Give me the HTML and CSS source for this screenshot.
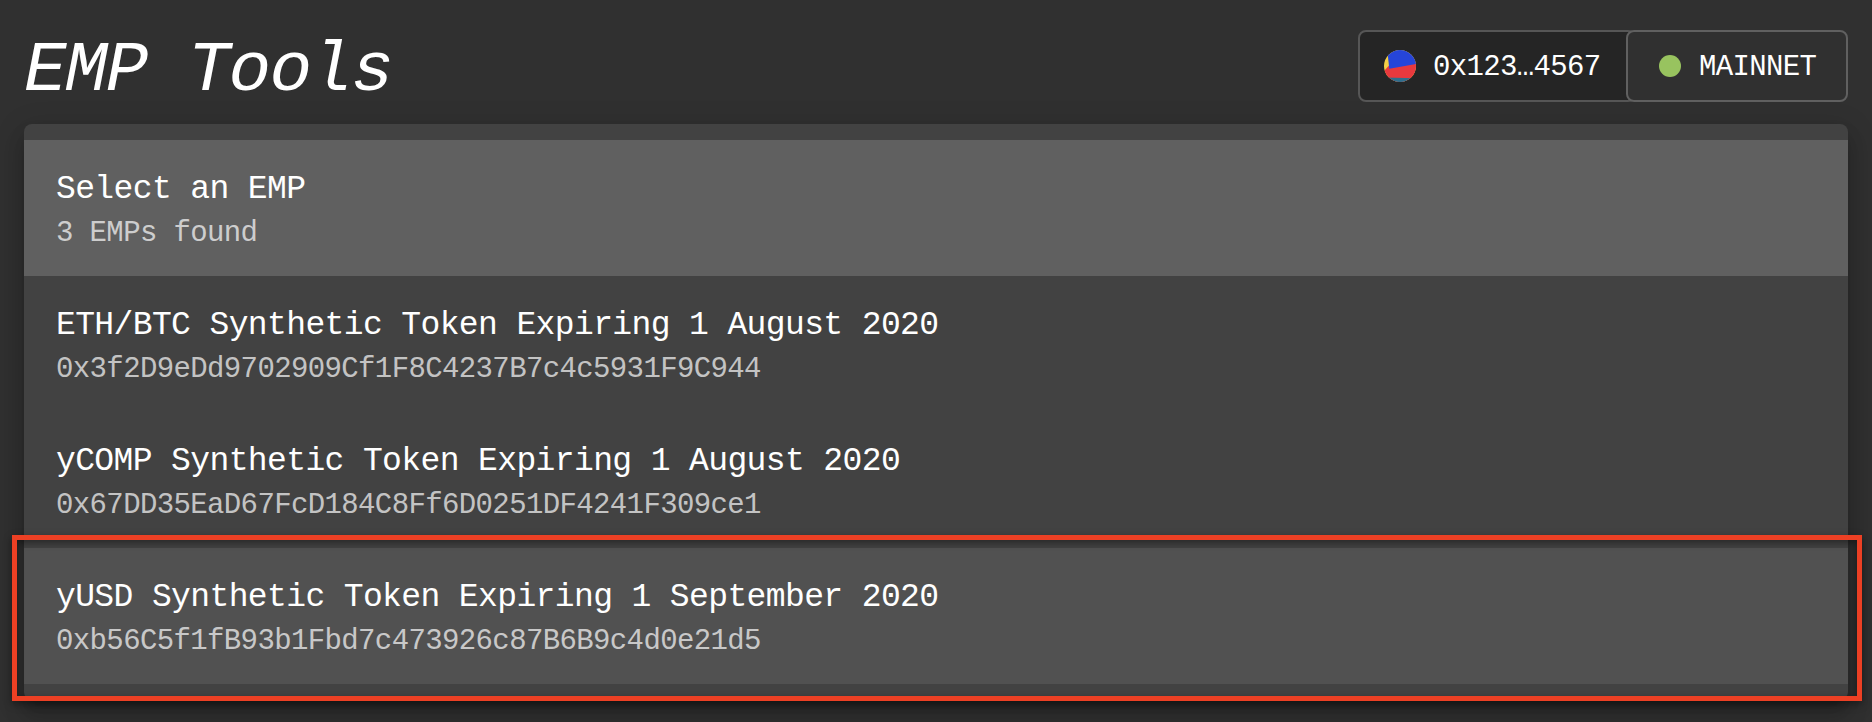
FILE: index.html
```html
<!DOCTYPE html>
<html lang="en">
<head>
<meta charset="utf-8">
<title>EMP Tools</title>
<link rel="stylesheet" href="styles.css">
</head>
<body>
<div class="page">
  <header class="header">
    <h1 class="title">EMP Tools</h1>
    <div class="wallet">
      <button class="chip account">
        <svg class="avatar" viewBox="0 0 32 32">
          <defs><clipPath id="disc"><circle cx="16" cy="16" r="16"/></clipPath></defs>
          <g clip-path="url(#disc)">
            <rect width="32" height="32" fill="#f3cf47"/>
            <path d="M-2 23.300L5 15.500L34 12V34H-2Z" fill="#e8393e"/>
            <path d="M3 -2H34V13.700L5.300 18.700Z" fill="#2645d9"/>
            <path d="M0 27.400L32 28.300V34H0Z" fill="#2e6e8c"/>
          </g>
        </svg>
        <span class="label">0x123…4567</span>
      </button>
      <button class="chip network">
        <span class="dot"></span>
        <span class="label">MAINNET</span>
      </button>
    </div>
  </header>
  <main class="card">
    <ul class="list">
      <li class="row heading"><span class="primary">Select an EMP</span><span class="secondary">3 EMPs found</span></li>
      <li class="row"><span class="primary">ETH/BTC Synthetic Token Expiring 1 August 2020</span><span class="secondary">0x3f2D9eDd9702909Cf1F8C4237B7c4c5931F9C944</span></li>
      <li class="row"><span class="primary">yCOMP Synthetic Token Expiring 1 August 2020</span><span class="secondary">0x67DD35EaD67FcD184C8Ff6D0251DF4241F309ce1</span></li>
      <li class="row hovered"><span class="primary">yUSD Synthetic Token Expiring 1 September 2020</span><span class="secondary">0xb56C5f1fB93b1Fbd7c473926c87B6B9c4d0e21d5</span></li>
    </ul>
    <div class="highlight"></div>
  </main>
</div>
</body>
</html>
```
FILE: styles.css
```css
* { box-sizing: border-box; }
body {
  margin: 0;
  height: 722px;
  overflow: hidden;
  background: #303030;
  color: #fff;
  font-family: "Liberation Mono", monospace;
}
.page { padding: 0 24px; }
.header {
  height: 124px;
  display: flex;
  justify-content: space-between;
  align-items: flex-start;
  padding-top: 30px;
}
.title {
  margin: 0;
  padding-top: 5px;
  font-size: 71px;
  line-height: 72px;
  font-weight: 400;
  font-style: italic;
  letter-spacing: -1.7px;
}
.wallet { display: flex; }
.chip {
  height: 72px;
  display: flex;
  align-items: center;
  border: 2px solid #606060;
  border-radius: 8px;
  background: #303030;
  color: #fff;
  font-family: inherit;
  font-size: 29px;
  letter-spacing: -0.65px;
  padding: 0;
  white-space: nowrap;
}
.account {
  width: 278px;
  margin-right: -10px;
  padding-left: 24px;
  gap: 17px;
  background: #252525;
  border-color: #565656;
}
.avatar { width: 32px; height: 32px; }
.label { padding-top: 2px; }
.network {
  position: relative;
  width: 222px;
  padding-left: 31px;
  gap: 18px;
}
.dot {
  width: 22px;
  height: 22px;
  border-radius: 50%;
  background: #98c35f;
}
.card {
  position: relative;
  height: 576px;
  padding: 16px 0;
  border-radius: 8px;
  background: #424242;
  box-shadow: 0 10px 10px -6px rgba(0,0,0,.2), 0 16px 20px 2px rgba(0,0,0,.14), 0 6px 28px 4px rgba(0,0,0,.12);
}
.list { margin: 0; padding: 0; list-style: none; }
.row {
  height: 136px;
  display: flex;
  flex-direction: column;
  padding: 26px 32px 22px;
  white-space: pre;
}
.heading { background: #606060; }
.hovered { background: #515151; }
.primary {
  font-size: 33px;
  line-height: 48px;
  letter-spacing: -0.62px;
}
.secondary {
  font-size: 29px;
  line-height: 40px;
  letter-spacing: -0.62px;
  color: rgba(255,255,255,.7);
}
.highlight {
  position: absolute;
  left: -12px;
  right: -14px;
  top: 411px;
  height: 166px;
  border: 5px solid #ed4024;
  box-shadow: 0 3px 8px rgba(0,0,0,.4), inset 0 3px 7px rgba(0,0,0,.4);
}
```
